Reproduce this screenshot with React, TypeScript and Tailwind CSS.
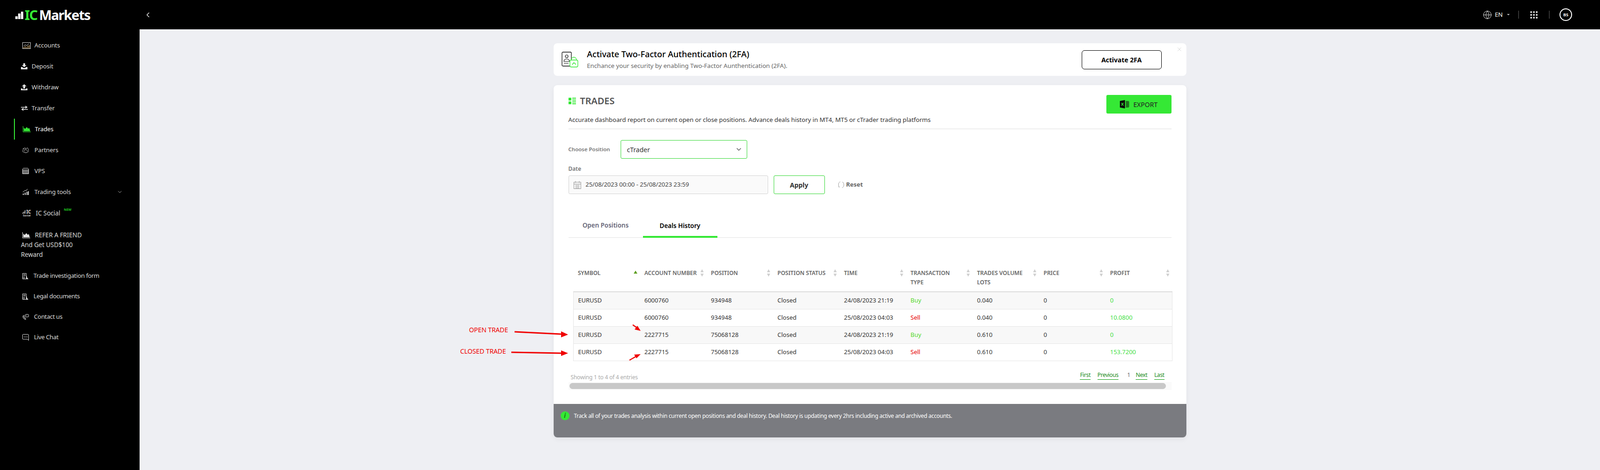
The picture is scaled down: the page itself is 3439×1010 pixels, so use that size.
import { ChevronDown, ChevronLeft, Globe, X } from 'lucide-react';
import type { ReactNode } from 'react';

const Svg = ({ w, h, children }: { w: number; h: number; children: ReactNode }) => (
  <svg width={w} height={h} viewBox={`0 0 ${w} ${h}`} fill="none" className="shrink-0">
    {children}
  </svg>
);

const AccountsIcon = () => (
  <Svg w={18} h={14}>
    <rect x="0.5" y="0.5" width="17" height="13" stroke="#d6d6d6" />
    <path d="M3 8l3-3 3 2 5-4" stroke="#d6d6d6" />
    <path d="M3 13V10M6 13V8M9 13V10M12 13V7M15 13V6" stroke="#c9a66b" strokeWidth="1.4" />
  </Svg>
);
const DepositIcon = () => (
  <Svg w={14} h={13}>
    <path d="M5 0h4v4h3L7 8.5 2 4h3z" fill="#e4e4e4" />
    <path d="M0 8h3l2 2h4l2-2h3v5H0z" fill="#e4e4e4" />
  </Svg>
);
const WithdrawIcon = () => (
  <Svg w={14} h={13}>
    <path d="M7 0l5 4.5H9V9H5V4.5H2z" fill="#e4e4e4" />
    <path d="M0 9h3v1.5h8V9h3v4H0z" fill="#e4e4e4" />
  </Svg>
);
const TransferIcon = () => (
  <Svg w={15} h={11}>
    <path d="M0 3.5h11.5M9.5 0.8l3.5 2.7-3.5 2" stroke="#e4e4e4" strokeWidth="1.5" />
    <path d="M15 8H3M5.5 5.3L2 8l3.5 2.5" stroke="#e4e4e4" strokeWidth="1.5" />
  </Svg>
);
const AreaIcon = ({ color }: { color: string }) => (
  <Svg w={17} h={13}>
    <path d="M0.5 0v12.5H17" stroke={color} />
    <path d="M2 11V3l3 3 3.500-4 3 3.500L14 4l2 7z" fill={color} />
  </Svg>
);
const PartnersIcon = () => (
  <Svg w={14} h={12}>
    <path d="M2 2.500L5 1l3 1 3-1 2 2.500v5L9 11H5L1 8.500z" stroke="#cfcfcf" strokeWidth="1.300" strokeDasharray="2 1" />
    <path d="M4 5l3-1.500 4 3.500M4 8l2-2" stroke="#cfcfcf" />
  </Svg>
);
const VpsIcon = () => (
  <Svg w={14} h={13}>
    <path d="M2 .5h10l1.500 2v10h-13v-10z" stroke="#dcdcdc" />
    <path d="M1 4.500h12M1 7.500h12M1 10.500h12" stroke="#dcdcdc" strokeWidth="1.300" />
  </Svg>
);
const ToolsIcon = () => (
  <Svg w={14} h={13}>
    <path d="M1 13v-3h2v3zM5 13V8h2v5zM9 13V6h2v7zM12 13V5h2v8z" fill="#d8d8d8" />
    <path d="M1 7l5-4 2 1 3-4" stroke="#d8d8d8" />
  </Svg>
);
const SocialIcon = () => (
  <div className="flex w-[19px] shrink-0 flex-col items-center leading-none">
    <div className="flex items-end gap-[1px]">
      <Svg w={7} h={7}>
        <path d="M0 5h1.500v2H0zM2.500 3H4v4H2.500zM5 0h1.500v7H5z" fill="#ddd" />
      </Svg>
      <span className="text-[10px] font-bold leading-[8px] text-[#ddd]">IC</span>
    </div>
    <span className="mt-[1px] text-[6px] font-semibold leading-[6px] text-[#ddd]">Social</span>
  </div>
);
const FormIcon = () => (
  <Svg w={13} h={13}>
    <path d="M.5.500h8v12h-8z" stroke="#d8d8d8" />
    <path d="M2 3h5M2 5h5" stroke="#d8d8d8" />
    <rect x="2" y="8" width="3" height="3" stroke="#d8d8d8" strokeWidth="0.800" />
    <path d="M10 5v4l3 4H7.500z" fill="#d8d8d8" />
  </Svg>
);
const ContactIcon = () => (
  <Svg w={14} h={13}>
    <path d="M2 3c-2 3 1 8 6 9M4 2C2.500 5 5 9 8 10" stroke="#d8d8d8" strokeWidth="1.200" />
    <rect x="6.500" y="0.500" width="7" height="5.500" rx="1" stroke="#d8d8d8" />
    <path d="M8 3h4" stroke="#d8d8d8" strokeDasharray="1 1" />
  </Svg>
);
const ChatIcon = () => (
  <Svg w={14} h={14}>
    <path d="M1.500.500h11a1 1 0 011 1V13.500L11 11H1.500a1 1 0 01-1-1V1.500a1 1 0 011-1z" stroke="#d8d8d8" />
    <path d="M3.500 6h1.500M6.500 6H8M9.500 6H11" stroke="#d8d8d8" strokeWidth="1.500" />
  </Svg>
);

const navTop = [
  { label: 'Accounts', icon: <AccountsIcon />, row: 'pl-[48px] gap-[8px]' },
  { label: 'Deposit', icon: <DepositIcon />, row: 'pl-[45px] gap-[9px]' },
  { label: 'Withdraw', icon: <WithdrawIcon />, row: 'pl-[45px] gap-[9px]' },
  { label: 'Transfer', icon: <TransferIcon />, row: 'pl-[45px] gap-[8px]' },
  { label: 'Trades', icon: <AreaIcon color="#35e835" />, row: 'pl-[49px] gap-[9px] text-white', active: true },
  { label: 'Partners', icon: <PartnersIcon />, row: 'pl-[48px] gap-[12px]' },
  { label: 'VPS', icon: <VpsIcon />, row: 'pl-[48px] gap-[12px]' },
];

const navBottom = [
  { label: 'Trade investigation form', icon: <FormIcon /> },
  { label: 'Legal documents', icon: <FormIcon /> },
  { label: 'Contact us', icon: <ContactIcon /> },
  { label: 'Live Chat', icon: <ChatIcon /> },
];

const rows = [
  { account: '6000760', position: '934948', time: '24/08/2023 21:19', type: 'Buy', lots: '0.040', profit: '0' },
  { account: '6000760', position: '934948', time: '25/08/2023 04:03', type: 'Sell', lots: '0.040', profit: '10.0800' },
  { account: '2227715', position: '75068128', time: '24/08/2023 21:19', type: 'Buy', lots: '0.610', profit: '0' },
  { account: '2227715', position: '75068128', time: '25/08/2023 04:03', type: 'Sell', lots: '0.610', profit: '153.7200' },
];

const columns: ReactNode[] = [
  'SYMBOL',
  'ACCOUNT NUMBER',
  'POSITION',
  'POSITION STATUS',
  'TIME',
  <>TRANSACTION<br />TYPE</>,
  <>TRADES VOLUME<br />LOTS</>,
  'PRICE',
  'PROFIT',
];

function SortArrows({ up }: { up?: boolean }) {
  return (
    <svg width="8" height="18" viewBox="0 0 8 18" className="mt-[1px] shrink-0">
      {up ? (
        <path d="M4 3.500L8 10H0z" fill="#5c9e1a" />
      ) : (
        <>
          <path d="M4 0.500L7.500 7H.5z" fill="#cfcfcf" />
          <path d="M.5 10h7L4 16.500z" fill="#cfcfcf" />
        </>
      )}
    </svg>
  );
}

function Sidebar() {
  return (
    <aside className="flex w-[300px] shrink-0 flex-col bg-black text-[13px] tracking-[-0.1px] text-[#d9d9d9]">
      <div className="flex h-[63px] items-center pl-[33px]">
        <svg width="17" height="16" viewBox="0 0 17 16" className="mt-[3px] shrink-0">
          <path d="M0 10h5v6H0zM6 4h5v12H6zM12 0h5v16h-5z" fill="#fff" />
        </svg>
        <span className="ml-[3px] font-['Inter'] text-[29px] font-bold leading-none tracking-[-1.5px] text-[#35e835]">IC</span>
        <span className="ml-[4px] font-['Inter'] text-[29px] font-bold leading-none tracking-[-1.5px] text-white">Markets</span>
      </div>
      <nav className="pt-[12px]">
        {navTop.map((item) => (
          <div
            key={item.label}
            className={`flex h-[45px] items-center ${item.row} ${item.active ? 'ml-[30px] border-l-2 border-[#35e835] !pl-[17px]' : ''}`}
          >
            {item.icon}
            <span>{item.label}</span>
          </div>
        ))}
        <div className="flex h-[45px] items-center justify-between pl-[48px] pr-[36px]">
          <div className="flex items-center gap-[12px]">
            <ToolsIcon />
            <span>Trading tools</span>
          </div>
          <ChevronDown size={13} strokeWidth={1.5} />
        </div>
        <div className="flex h-[47px] items-center gap-[10px] pl-[48px]">
          <SocialIcon />
          <span className="text-[13.500px]">IC Social</span>
          <span className="mb-[14px] ml-[-2px] text-[7px] font-bold text-[#1fc01f]">NEW</span>
        </div>
        <div className="pl-[45px] pt-[13px] text-[13.500px] leading-[21px]">
          <div className="flex items-center gap-[10px] pl-[3px]">
            <AreaIcon color="#e4e4e4" />
            <span>REFER A FRIEND</span>
          </div>
          <div>And Get USD$100</div>
          <div>Reward</div>
        </div>
        <div className="pt-[13px] tracking-[-0.35px]">
          {navBottom.map((item) => (
            <div key={item.label} className="flex h-[44px] items-center gap-[11px] pl-[48px]">
              {item.icon}
              <span>{item.label}</span>
            </div>
          ))}
        </div>
      </nav>
    </aside>
  );
}

function Header() {
  return (
    <header className="flex h-[63px] shrink-0 items-center justify-between bg-black pl-[9px] pr-[60px] text-white">
      <ChevronLeft size={18} strokeWidth={1.5} />
      <div className="flex items-center">
        <Globe size={20} strokeWidth={1.2} className="text-[#e0e0e0]" />
        <span className="ml-[6px] text-[13px]">EN</span>
        <span className="ml-[9px] h-0 w-0 border-x-[3px] border-t-[3px] border-x-transparent border-t-[#bbb]" />
        <span className="ml-[18px] h-[17px] w-[2px] bg-[#333]" />
        <div className="ml-[24px] grid grid-cols-3 gap-[2px]">
          {Array.from({ length: 9 }).map((_, i) => (
            <span key={i} className="h-[4px] w-[4px] rounded-full bg-[#ddd]" />
          ))}
        </div>
        <span className="ml-[24px] h-[17px] w-[2px] bg-[#333]" />
        <div className="ml-[21px] flex h-[27px] w-[27px] items-center justify-center rounded-full border-2 border-white text-[9px] font-bold">
          BS
        </div>
      </div>
    </header>
  );
}

function TwoFactorCard() {
  return (
    <div className="relative flex h-[70px] items-center rounded-lg bg-white pl-[17px] pr-[53px] font-['Roboto']">
      <svg width="36" height="34" viewBox="0 0 36 34" className="shrink-0">
        <rect x="1" y="1" width="20" height="30" rx="2" stroke="#111" strokeWidth="1.300" fill="none" />
        <circle cx="11" cy="10" r="3" stroke="#111" strokeWidth="1.200" fill="none" />
        <path d="M5 21c0-7 12-7 12 0zM5 25h10" stroke="#111" strokeWidth="1.200" fill="none" />
        <rect x="18" y="18" width="17" height="15" rx="3" stroke="#35e835" strokeWidth="1.300" fill="#fff" />
        <path d="M21 18c0-8 11-8 11 0" stroke="#35e835" strokeWidth="1.300" fill="none" />
        <path d="M23 28l3-4 3 1 1 3" stroke="#35e835" strokeWidth="1.500" fill="none" />
      </svg>
      <div className="ml-[19px]">
        <div className="text-[18px] font-medium leading-[22px] text-black">Activate Two-Factor Authentication (2FA)</div>
        <div className="mt-[4px] text-[13.200px] leading-[20px] text-[#666]">
          Enchance your security by enabling Two-Factor Aunthentication (2FA).
        </div>
      </div>
      <button className="ml-auto h-[41px] w-[172px] rounded-md border-[1.5px] border-black font-['Open_Sans'] text-[14px] font-bold text-black">
        Activate 2FA
      </button>
      <X size={14} strokeWidth={1} className="absolute right-[8px] top-[6px] text-[#bbb]" />
    </div>
  );
}

function TradesTable() {
  return (
    <div className="ml-[10px]">
      <table className="w-[1286px] table-fixed border-collapse text-left">
        <thead>
          <tr className="border-b-2 border-[#ddd]">
            {columns.map((col, i) => (
              <th key={i} className="w-[143px] px-[10px] pb-[9px] pt-[10px] align-top text-[12px] font-semibold leading-[20px] text-[#666]">
                <div className="mr-[-5px] flex justify-between">
                  <span>{col}</span>
                  <SortArrows up={i === 0} />
                </div>
              </th>
            ))}
          </tr>
        </thead>
        <tbody className="text-[13px] text-[#333]">
          {rows.map((row, i) => (
            <tr key={i} className={`h-[37px] border border-[#e6e6e6] ${i % 2 === 0 ? 'bg-[#f8f8f8]' : 'bg-white'}`}>
              <td className="px-[10px]">EURUSD</td>
              <td className="px-[10px]">{row.account}</td>
              <td className="px-[10px]">{row.position}</td>
              <td className="px-[10px]">Closed</td>
              <td className="px-[10px]">{row.time}</td>
              <td className={`px-[10px] ${row.type === 'Buy' ? 'text-[#55d92b]' : 'text-[#e60000]'}`}>{row.type}</td>
              <td className="px-[10px]">{row.lots}</td>
              <td className="px-[10px]">0</td>
              <td className="px-[10px] text-[#45e045]">{row.profit}</td>
            </tr>
          ))}
        </tbody>
      </table>
    </div>
  );
}

function Pagination() {
  const link = 'border-b-[1.5px] border-[#0a9a0a] pb-[1px] text-[#1a8a1a]';
  return (
    <div className="flex items-center pr-[15px] text-[12px] leading-[16px] tracking-[-0.4px]">
      <span className={link}>First</span>
      <span className={`ml-[15px] ${link}`}>Previous</span>
      <span className="ml-[19px] pb-[2px] text-[#666]">1</span>
      <span className={`ml-[12px] ${link}`}>Next</span>
      <span className={`ml-[15px] ${link}`}>Last</span>
    </div>
  );
}

function TradesCard() {
  return (
    <div className="mt-[20px] rounded-lg bg-white pt-[21px] shadow-[0_4px_12px_rgba(0,0,0,0.05)]">
      <div className="px-[32px]">
        <div className="flex h-[40px] items-start justify-between">
          <div className="flex items-center gap-[9px]">
            <svg width="16" height="16" viewBox="0 0 16 16" className="shrink-0">
              <path d="M0 1h6v6H0zM0 9h6v6H0zM8 1h8v2H8zM8 5h8v2H8zM8 9h8v2H8zM8 13h8v2H8z" fill="#35e835" />
            </svg>
            <span className="text-[20px] font-semibold leading-[26px] text-[#555]">TRADES</span>
          </div>
          <button className="flex h-[40px] w-[140px] items-center justify-center gap-[9px] rounded-[3px] bg-[#35e835] text-[14px] text-[#222]">
            <svg width="20" height="18" viewBox="0 0 20 18">
              <path d="M0 2l11-2v18L0 16z" fill="#0b0b0b" />
              <path d="M12 3h7v12h-7M12 6h7M12 9h7M12 12h7M15.500 3v12" stroke="#0b0b0b" fill="none" />
              <text x="2.500" y="12" fontSize="9" fontWeight="700" fill="#35e835">X</text>
            </svg>
            EXPORT
          </button>
        </div>
        <p className="border-b-2 border-[#eee] pb-[9px] pt-[3px] text-[13.150px] leading-[20px] text-[#333]">
          Accurate dashboard report on current open or close positions. Advance deals history in MT4, MT5 or cTrader trading platforms
        </p>
        <div className="mt-[23px] flex items-center">
          <label className="w-[112px] text-[11.500px] font-semibold text-[#777]">Choose Position</label>
          <div className="flex h-[40px] w-[272px] items-center justify-between rounded-[3px] border border-[#35d835] pl-[13px] pr-[9px] text-[14px] text-[#333]">
            cTrader
            <ChevronDown size={16} strokeWidth={2} className="text-[#555]" />
          </div>
        </div>
        <label className="mt-[14px] block text-[12px] font-semibold leading-[16px] text-[#777]">Date</label>
        <div className="mt-[6px] flex items-center">
          <div className="flex h-[40px] w-[429px] items-center gap-[10px] rounded-[3px] border border-[#d4d4d4] bg-[#fafafa] pl-[10px] text-[13px] text-[#444]">
            <svg width="16" height="17" viewBox="0 0 16 17">
              <rect x="0.500" y="2.500" width="15" height="14" stroke="#999" fill="none" />
              <path d="M4 0v4M12 0v4M1 6.500h14" stroke="#999" />
              <path d="M3 9h10M3 12h10M3 15h10M5.500 8v8M8 8v8M10.500 8v8" stroke="#bbb" />
            </svg>
            25/08/2023 00:00 - 25/08/2023 23:59
          </div>
          <button className="ml-[12px] h-[40px] w-[110px] rounded-[3px] border border-[#35d835] text-[14px] font-bold text-[#333]">
            Apply
          </button>
          <div className="ml-[28px] flex items-center gap-[4px] text-[13px] font-bold text-[#666]">
            <svg width="14" height="16" viewBox="0 0 14 16" fill="none">
              <path d="M5 1.500C1 3 0 9 3 13M9 14.500c4-1.500 5-7.500 2-11.500" stroke="#999" />
              <path d="M3 14l-1.500-2.500M9.500 2l2 1.500" stroke="#999" />
            </svg>
            Reset
          </div>
        </div>
        <div className="mt-[43px] flex h-[51px] border-b border-[#e2e2e2] text-[13.500px] font-semibold">
          <div className="flex w-[160px] items-center justify-center pb-[1px] text-[#667]">Open Positions</div>
          <div className="flex h-[51px] w-[160px] items-center justify-center border-b-4 border-[#35e835] pt-[3px] text-black">Deals History</div>
        </div>
      </div>
      <div className="ml-[32px] mr-[32px] mt-[56px]">
        <TradesTable />
        <div className="flex h-[45px] items-end justify-between pb-[1px] pl-[5px]">
          <span className="text-[12px] leading-[18px] tracking-[-0.2px] text-[#aaa]">Showing 1 to 4 of 4 entries</span>
          <div className="mb-[4px]">
            <Pagination />
          </div>
        </div>
        <div className="h-[17px] bg-[#fafafa] pb-[2px] pl-[2px] pr-[12px] pt-[2px]">
          <div className="h-[13px] rounded-full bg-[#c8c8c8]" />
        </div>
      </div>
      <div className="mt-[30px] flex h-[72px] items-start gap-[10px] rounded-b-lg bg-[#7a7b80] pl-[15px] pt-[16px] text-[12px] leading-[20px] tracking-[-0.32px] text-white">
        <span className="flex h-[19px] w-[19px] items-center justify-center rounded-full bg-[#35e835] font-['Liberation_Serif'] text-[14px] font-bold italic text-[#158a15]">
          i
        </span>
        Track all of your trades analysis within current open positions and deal history. Deal history is updating every 2hrs including active and archived accounts.
      </div>
    </div>
  );
}

// red notes drawn on top of the screenshot
function Annotations() {
  return (
    <>
      <svg width="3439" height="1010" viewBox="0 0 3439 1010" className="pointer-events-none absolute left-0 top-0">
        <path d="M1106 713l100 5" stroke="#f00000" strokeWidth="3" />
        <path d="M1206 712l15 7-15 6z" fill="#f00000" />
        <path d="M1099 757l108 2" stroke="#f00000" strokeWidth="3" />
        <path d="M1206 753l15 6-15 6z" fill="#f00000" />
        <path d="M1360 698l10 7" stroke="#f00000" strokeWidth="2.500" />
        <path d="M1377 711l-13-3 6-8z" fill="#f00000" />
        <path d="M1353 774l14-8" stroke="#f00000" strokeWidth="2.500" />
        <path d="M1377 761l-14 1 5 8z" fill="#f00000" />
      </svg>
      <span className="absolute left-[1008px] top-[699px] text-[14px] leading-[20px] tracking-[-0.1px] text-[#f00000]">OPEN TRADE</span>
      <span className="absolute left-[989px] top-[745px] text-[14px] leading-[20px] tracking-[-0.1px] text-[#f00000]">CLOSED TRADE</span>
    </>
  );
}

export default function App() {
  return (
    <div className="relative flex h-[1010px] overflow-hidden bg-[#eeeff3] font-['Open_Sans',sans-serif]">
      <Sidebar />
      <main className="flex min-w-0 flex-1 flex-col">
        <Header />
        <div className="mx-auto w-[1360px] pt-[30px]">
          <TwoFactorCard />
          <TradesCard />
        </div>
      </main>
      <Annotations />
    </div>
  );
}
